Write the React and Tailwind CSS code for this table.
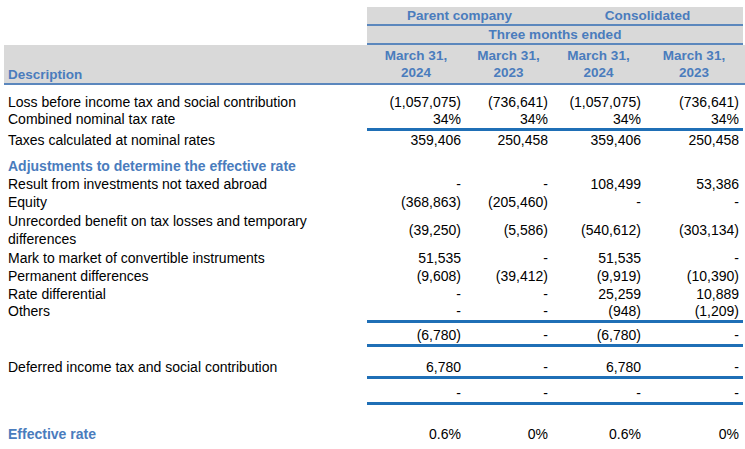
import React from 'react';

const BLUE = 'text-[#4a7cbd]';

// widths of the four number columns
const COLS = ['w-[98px]', 'w-[87px]', 'w-[93px]', 'w-[98px]'];

function NumRow({ label, values, line, h = 'h-[18px]', labelClass = 'text-black', end = false, twoLine = false }) {
  return (
    <div className={`flex ${end ? 'items-end' : ''}`}>
      <div className={`w-[363px] pl-1 ${line ? 'leading-[17px] mb-[3px]' : 'leading-[18px]'} ${labelClass} ${twoLine ? 'py-[1px]' : ''}`}>
        {label}
      </div>
      <div className={`flex ${h} ${end ? 'items-end' : 'items-center'} ${line ? 'border-b-[3px] border-[#1f6fb6]' : ''}`}>
        {values.map((v, i) => (
          <div key={i} className={`${COLS[i]} pr-1 text-right ${line ? 'leading-[17px]' : 'leading-[18px]'} whitespace-nowrap`}>
            {v}
          </div>
        ))}
      </div>
    </div>
  );
}

export default function App() {
  return (
    <div
      className="w-[745px] h-[449px] bg-white pl-1 pt-[7px] text-[14px] text-black"
      style={{ fontFamily: '"Liberation Sans", Arial, sans-serif' }}
    >
      {/* Cabeçalho */}
      <div className={`font-bold ${BLUE} text-[13.5px]`}>
        <div className="flex">
          <div className="w-[363px]" />
          <div className="flex h-[19px] bg-[#d9d9d9] border-b-2 border-[#5b87bd] leading-[17px]">
            <div className="w-[185px] text-center">Parent company</div>
            <div className="w-[191px] text-center">Consolidated</div>
          </div>
        </div>
        <div className="flex">
          <div className="w-[363px]" />
          <div className="w-[376px] h-[19px] bg-[#d9d9d9] border-b-2 border-[#5b87bd] leading-[17px] text-center">
            Three months ended
          </div>
        </div>
        <div className="flex h-[40px] bg-[#d9d9d9] border-b-2 border-[#5b87bd]">
          <div className="w-[363px] pl-1 flex items-end leading-[17px]">Description</div>
          {['2024', '2023', '2024', '2023'].map((y, i) => (
            <div key={i} className={`${COLS[i]} text-center leading-[17px] pt-[2px]`}>
              March 31,
              <br />
              {y}
            </div>
          ))}
        </div>
      </div>

      {/* Corpo */}
      <div className="pt-[8px]">
        <NumRow label="Loss before income tax and social contribution" values={['(1,057,075)', '(736,641)', '(1,057,075)', '(736,641)']} />
        <NumRow label="Combined nominal tax rate" values={['34%', '34%', '34%', '34%']} line h="h-[20px]" end />
        <NumRow label="Taxes calculated at nominal rates" values={['359,406', '250,458', '359,406', '250,458']} h="h-[17px]" />

        <div className="h-[8px]" />
        <NumRow label="Adjustments to determine the effective rate" labelClass={`font-bold ${BLUE}`} values={['', '', '', '']} />
        <NumRow label="Result from investments not taxed abroad" values={['-', '-', '108,499', '53,386']} />
        <NumRow label="Equity" values={['(368,863)', '(205,460)', '-', '-']} />
        <NumRow
          label={<>Unrecorded benefit on tax losses and temporary<br />differences</>}
          twoLine
          h="h-[37px]"
          values={['(39,250)', '(5,586)', '(540,612)', '(303,134)']}
        />
        <NumRow label="Mark to market of convertible instruments" values={['51,535', '-', '51,535', '-']} />
        <NumRow label="Permanent differences" values={['(9,608)', '(39,412)', '(9,919)', '(10,390)']} />
        <NumRow label="Rate differential" values={['-', '-', '25,259', '10,889']} />
        <NumRow label="Others" values={['-', '-', '(948)', '(1,209)']} line h="h-[20px]" end />
        <NumRow label="" values={['(6,780)', '-', '(6,780)', '-']} line h="h-[24px]" end />

        <div className="h-[12px]" />
        <NumRow label="Deferred income tax and social contribution" values={['6,780', '-', '6,780', '-']} line h="h-[20px]" end />
        <NumRow label="" values={['-', '-', '-', '-']} line h="h-[26px]" end />

        <div className="h-[20px]" />
        <NumRow label="Effective rate" labelClass={`font-bold ${BLUE}`} values={['0.6%', '0%', '0.6%', '0%']} />
      </div>
    </div>
  );
}
